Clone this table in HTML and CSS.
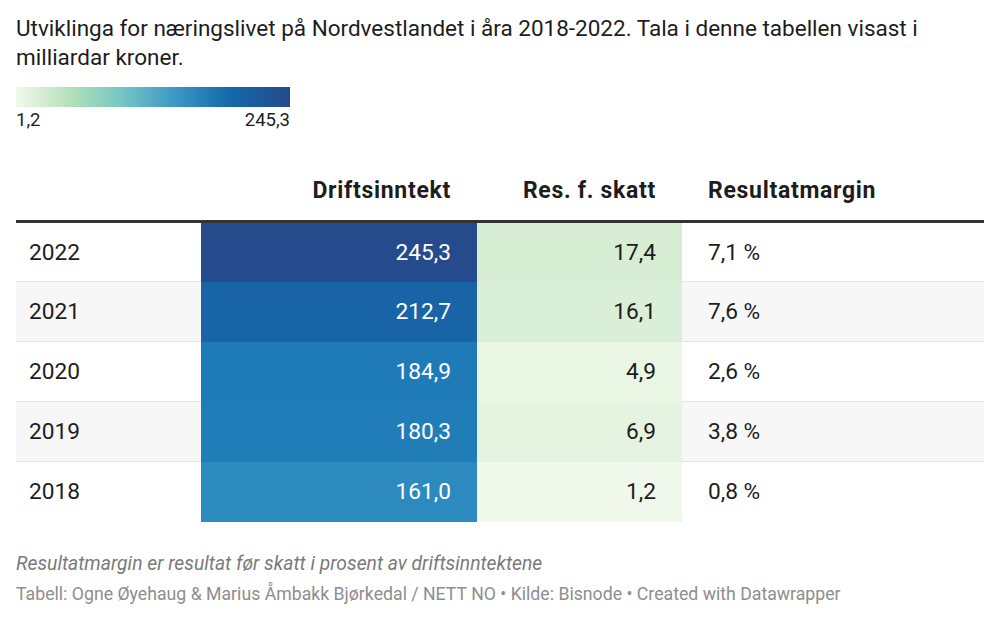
FILE: index.html
```html
<!DOCTYPE html>
<html lang="nn">
<head>
<meta charset="utf-8">
<title>Næringslivet på Nordvestlandet</title>
<link rel="stylesheet" href="styles.css">
</head>
<body>
<div class="chart">
  <h1 class="title">Utviklinga for næringslivet på Nordvestlandet i åra 2018-2022. Tala i denne tabellen visast i milliardar kroner.</h1>
  <div class="legend">
    <div class="legend-bar"></div>
    <div class="legend-labels"><span>1,2</span><span>245,3</span></div>
  </div>
  <table class="data">
    <colgroup>
      <col class="c-year"><col class="c-drift"><col class="c-skatt"><col class="c-margin">
    </colgroup>
    <thead>
      <tr>
        <th></th>
        <th class="num">Driftsinntekt</th>
        <th class="num">Res. f. skatt</th>
        <th class="txt">Resultatmargin</th>
      </tr>
    </thead>
    <tbody>
      <tr>
        <td>2022</td>
        <td class="num heat light" style="background-color:#264b8c">245,3</td>
        <td class="num heat" style="background-color:#d7eed5">17,4</td>
        <td class="txt">7,1 %</td>
      </tr>
      <tr class="alt">
        <td>2021</td>
        <td class="num heat light" style="background-color:#1864a6">212,7</td>
        <td class="num heat" style="background-color:#d9efd7">16,1</td>
        <td class="txt">7,6 %</td>
      </tr>
      <tr>
        <td>2020</td>
        <td class="num heat light" style="background-color:#1f7bb8">184,9</td>
        <td class="num heat" style="background-color:#e9f6e4">4,9</td>
        <td class="txt">2,6 %</td>
      </tr>
      <tr class="alt">
        <td>2019</td>
        <td class="num heat light" style="background-color:#217db8">180,3</td>
        <td class="num heat" style="background-color:#e5f4e0">6,9</td>
        <td class="txt">3,8 %</td>
      </tr>
      <tr class="last">
        <td>2018</td>
        <td class="num heat light" style="background-color:#2d8abe">161,0</td>
        <td class="num heat" style="background-color:#eff8ea">1,2</td>
        <td class="txt">0,8 %</td>
      </tr>
    </tbody>
  </table>
  <p class="note">Resultatmargin er resultat før skatt i prosent av driftsinntektene</p>
  <p class="source">Tabell: Ogne Øyehaug &amp; Marius Åmbakk Bjørkedal / NETT NO • Kilde: Bisnode • Created with Datawrapper</p>
</div>
</body>
</html>
```

FILE: styles.css
```css
* { box-sizing: border-box; }
html, body { margin: 0; padding: 0; background: #fff; }
body {
  font-family: Roboto, "Liberation Sans", Arial, sans-serif;
  color: #1d1d1d;
}
.chart {
  padding: 14px 16px 0 16px;
  width: 1000px;
}
.title {
  margin: 0;
  font-size: 22.5px;
  font-weight: 400;
  line-height: 29px;
  color: #1d1d1d;
  max-width: 940px;
}
.legend {
  margin-top: 15px;
  width: 274px;
}
.legend-bar {
  height: 20px;
  background: linear-gradient(to right, #f1f9ea 0%, #b2e0b8 20%, #78c7c4 38%, #3c98c5 58%, #1169ab 78%, #264a8b 100%);
}
.legend-labels {
  display: flex;
  justify-content: space-between;
  font-size: 18.5px;
  line-height: 26px;
  color: #1d1d1d;
}
.data {
  margin-top: 0;
  width: 968px;
  border-collapse: collapse;
  table-layout: fixed;
  font-size: 22.7px;
}
.c-year { width: 185px; }
.c-drift { width: 276px; }
.c-skatt { width: 205px; }
.c-margin { width: 302px; }
.data th {
  font-weight: 700;
  font-size: 23px;
  letter-spacing: 0.7px;
  padding: 44px 26px 15px 13px;
  vertical-align: bottom;
  border-bottom: 3px solid #333;
  line-height: 28px;
}
.data td {
  height: 60px;
  padding: 1px 26px 0 13px;
  border-bottom: 1px solid #e4e4e4;
  line-height: 24px;
}
.data tr.alt td { background-color: #f7f7f7; }
.data tr.last td { border-bottom-color: transparent; }
.data td.heat { border-bottom-color: transparent; }
.num { text-align: right; }
.txt { text-align: left; padding-left: 26px !important; }
.light { color: #fff; }
.note {
  margin: 30px 0 0 0;
  font-size: 19.3px;
  font-style: italic;
  line-height: 24px;
  color: #7a7a7a;
}
.source {
  margin: 7px 0 0 0;
  font-size: 17.7px;
  line-height: 22px;
  color: #8e8e8e;
}
```
